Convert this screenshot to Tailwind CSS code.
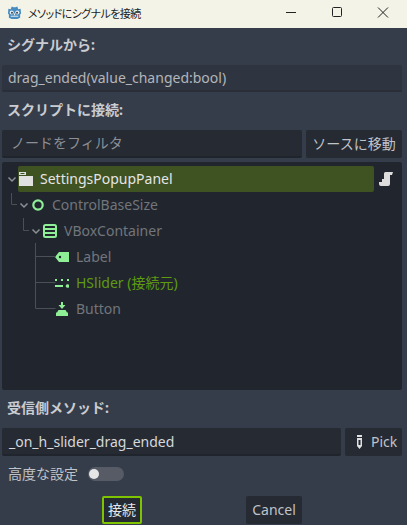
<!doctype html>
<html>
<head>
  <meta charset="UTF-8">
  <script src="https://cdn.jsdelivr.net/npm/@tailwindcss/browser@4"></script>
</head>
<body class="w-[407px] h-[525px] overflow-hidden bg-[#363d4a] font-['Noto_Sans','Noto_Sans_CJK_JP',sans-serif]">
  <!-- title bar -->
  <div class="h-[28px] bg-[#f3f3e8] flex items-center pl-[7px] text-[11px] tracking-[-0.6px] text-[#222] font-['Noto_Sans_CJK_JP',sans-serif] [font-feature-settings:'palt']">
    <svg class="w-[15px] h-[15px] mb-[4px]" viewBox="0 0 16 16">
      <path fill="#478cbf" d="M1 9 1.500 4l2.500.6L5 1.500l2 1h2l2-1 1 3.100L14.500 4l.5 5-1 1v3.500l-3 1.500H5l-3-1.500V10z"/>
      <circle cx="5" cy="8" r="2.200" fill="#e8eef3"/><circle cx="11" cy="8" r="2.200" fill="#e8eef3"/>
      <circle cx="5.300" cy="8.200" r="1.100" fill="#3a4a58"/><circle cx="10.700" cy="8.200" r="1.100" fill="#3a4a58"/>
      <rect x="7.400" y="9" width="1.200" height="2" fill="#e8eef3"/>
      <path d="M4 12h8" stroke="#e8eef3"/>
    </svg>
    <span class="ml-[6px] mb-[1px]">メソッドにシグナルを接続</span>
    <div class="ml-auto flex items-center">
      <svg class="w-[46px] h-[28px]" viewBox="0 0 46 28"><path d="M18 12.500h10" stroke="#222" fill="none"/></svg>
      <svg class="w-[46px] h-[28px]" viewBox="0 0 46 28"><rect x="18.500" y="7.500" width="9" height="9" rx="1" stroke="#222" fill="none"/></svg>
      <svg class="w-[46px] h-[28px] mr-[1px]" viewBox="0 0 46 28"><path d="M18 7.500l10 10M28 7.500l-10 10" stroke="#222" fill="none"/></svg>
    </div>
  </div>

  <div class="px-[2px] text-[14px] text-[#d6d8db]">
    <div class="h-[37px] flex items-center pl-[5px] pb-[4px] font-bold text-[#c9ccd1]">シグナルから:</div>
    <div class="h-[27px] w-[400px] flex items-center pl-[6px] bg-[#2f3540] border-b-2 border-[#292e38] rounded-[2px] text-[#b3b6bb]">drag_ended(value_changed:bool)</div>

    <div class="h-[38px] flex items-center pl-[5px] pb-[4px] font-bold text-[#c9ccd1]">スクリプトに接続:</div>
    <div class="flex gap-[4px] h-[28px] w-[400px]">
      <div class="w-[300px] flex items-center pl-[9px] pb-[1px] bg-[#252a33] border-b-2 border-[#20242c] rounded-[2px] text-[#8c8f95]">ノードをフィルタ</div>
      <div class="flex-1 flex items-center justify-center pb-[2px] bg-[#252a33] rounded-[2px] text-[#c0c3c8]">ソースに移動</div>
    </div>

    <!-- tree -->
    <div class="relative mt-[4px] h-[228px] w-[400px] bg-[#21262e] rounded-[2px] pt-[4px] text-[#72757b]">
      <svg class="absolute left-0 top-0 w-[120px] h-[160px] pointer-events-none" viewBox="0 0 120 160" fill="none" stroke="#4b4f56">
        <path d="M9.500 31v11.500h5.500M21.500 56v12.500h5.500M33.500 81v65.500M33.500 94.500h20M33.500 120.500h20M33.500 146.500h20"/>
      </svg>
      <div class="h-[26px] flex items-center">
        <svg class="ml-[4px] w-[12px] h-[12px]" viewBox="0 0 12 12"><path d="M2.500 4.500 6 8l3.500-3.500" stroke="#8d9096" stroke-width="1.500" fill="none"/></svg>
        <div class="h-[26px] w-[356px] flex items-center bg-[#3f5221] rounded-[2px] text-[#e4e5e7]">
          <svg class="ml-[1px] w-[14px] h-[14px]" viewBox="0 0 14 14"><path d="M0 0h7v3H0zM0 4h14v10H0z" fill="#e0e0e0"/><path d="M1.500 1h4v1h-4z" fill="#3f5221"/></svg>
          <span class="ml-[7px] pb-[2px]">SettingsPopupPanel</span>
        </div>
        <svg class="absolute left-[377px] top-[10px] w-[14px] h-[14px]" viewBox="0 0 14 14"><path d="M5 1.500Q5 0 6.500 0H14l-1 3h-2v9q0 2-2 2H2q-2 0-2-2v-2h3V7h2z" fill="#dcdcdc"/></svg>
      </div>
      <div class="h-[26px] flex items-center pl-[16px]">
        <svg class="w-[12px] h-[12px]" viewBox="0 0 12 12"><path d="M2.500 4.500 6 8l3.500-3.500" stroke="#8d9096" stroke-width="1.500" fill="none"/></svg>
        <svg class="ml-[2px] w-[12px] h-[12px]" viewBox="0 0 12 12"><circle cx="6" cy="6" r="4.700" stroke="#8eef97" stroke-width="2.200" fill="none"/></svg>
        <span class="ml-[8px] pb-[2px]">ControlBaseSize</span>
      </div>
      <div class="h-[26px] flex items-center pl-[28px]">
        <svg class="w-[12px] h-[12px]" viewBox="0 0 12 12"><path d="M2.500 4.500 6 8l3.500-3.500" stroke="#8d9096" stroke-width="1.500" fill="none"/></svg>
        <svg class="ml-[1px] w-[14px] h-[14px]" viewBox="0 0 14 14"><rect x="1" y="1" width="12" height="12" rx="1.500" stroke="#8eef97" stroke-width="2" fill="none"/><path d="M1 5h12M1 9h12" stroke="#8eef97" stroke-width="2"/></svg>
        <span class="ml-[7px] pb-[2px]">VBoxContainer</span>
      </div>
      <div class="h-[26px] flex items-center pl-[53px]">
        <svg class="w-[14px] h-[10px]" viewBox="0 0 14 10"><path d="M4 0h10v10H4L0 5z" fill="#8eef97"/><circle cx="5" cy="5" r="1.200" fill="#21262e"/></svg>
        <span class="ml-[7px] pb-[2px]">Label</span>
      </div>
      <div class="h-[26px] flex items-center pl-[53px] text-[#5f9a12]">
        <svg class="w-[14px] h-[10px]" viewBox="0 0 14 10"><path d="M0 7h8v2H0zM0 1h2v2H0zM6 1h2v2H6zM12 1h2v2h-2z" fill="#8eef97"/><circle cx="12.500" cy="8" r="1.800" fill="#8eef97"/></svg>
        <span class="ml-[7px] pb-[2px]">HSlider (接続元)</span>
      </div>
      <div class="h-[26px] flex items-center pl-[53px]">
        <svg class="w-[14px] h-[14px]" viewBox="0 0 14 14"><path d="M6 0h2v3h2.500L7 7 3.500 3H6zM3.500 8h7L12 10.500H2zM1 10.500h12V14H1z" fill="#8eef97"/></svg>
        <span class="ml-[7px] pb-[2px]">Button</span>
      </div>
    </div>

    <div class="h-[38px] flex items-center pl-[5px] pb-[3px] font-bold text-[#c9ccd1]">受信側メソッド:</div>
    <div class="flex gap-[4px] h-[28px] w-[400px]">
      <div class="w-[339px] flex items-center pl-[7px] bg-[#252a33] border-b-2 border-[#20242c] rounded-[2px] text-[#d6d8db]">_on_h_slider_drag_ended</div>
      <div class="flex-1 flex items-center pl-[12px] pb-[2px] bg-[#252a33] rounded-[2px] text-[#c0c3c8]">
        <svg class="w-[5px] h-[14px] mt-[2px]" viewBox="0 0 5 14"><path d="M0 0h5v2H0zM0 3h5v8l-2.500 3L0 11z" fill="#e0e0e0"/><path d="M1.500 5h2v5h-2z" fill="#252a33"/></svg>
        <span class="ml-[9px]">Pick</span>
      </div>
    </div>

    <div class="h-[36px] flex items-center pl-[6px] text-[#c0c3c8]">
      <span class="pb-[1px]">高度な設定</span>
      <div class="ml-[10px] w-[36px] h-[14px] rounded-full bg-[#565b65] flex items-center pl-[1px]">
        <div class="w-[10px] h-[10px] rounded-full bg-[#e6e6e6]"></div>
      </div>
    </div>

    <div class="flex h-[28px] mt-[4px] pl-[100px]">
      <div class="w-[40px] flex items-center justify-center pb-[2px] bg-[#252a33] border-2 border-[#7fc400] rounded-[2px] text-[#e4e5e7]">接続</div>
      <div class="ml-[104px] w-[56px] flex items-center justify-center pb-[2px] bg-[#252a33] rounded-[2px] text-[#c0c3c8]">Cancel</div>
    </div>
  </div>
</body>
</html>
